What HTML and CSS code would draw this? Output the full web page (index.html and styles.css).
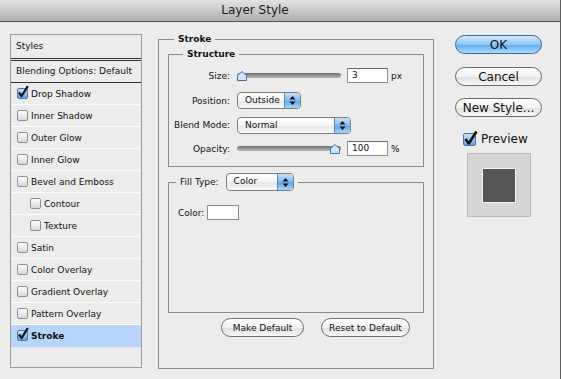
FILE: index.html
```html
<!DOCTYPE html>
<html lang="en">
<head>
    <meta charset="UTF-8">
    <title>Layer Style</title>
    <link rel="stylesheet" href="styles.css">
</head>
<body>
    <div class="window">
        <div class="titlebar">Layer Style</div>
        <div class="content">

            <!-- styles list on the left -->
            <div class="styles-list">
                <div class="list-head">Styles</div>
                <div class="list-blend">Blending Options: Default</div>
                <div class="item"><span class="cb on"><svg width="12" height="13" viewBox="0 0 12 13"><path d="M2 7.5 L4.6 11 L10.8 1.2" fill="none" stroke="#111" stroke-width="2.2" stroke-linejoin="round"/></svg></span>Drop Shadow</div>
                <div class="item"><span class="cb"></span>Inner Shadow</div>
                <div class="item"><span class="cb"></span>Outer Glow</div>
                <div class="item"><span class="cb"></span>Inner Glow</div>
                <div class="item"><span class="cb"></span>Bevel and Emboss</div>
                <div class="item sub"><span class="cb"></span>Contour</div>
                <div class="item sub"><span class="cb"></span>Texture</div>
                <div class="item"><span class="cb"></span>Satin</div>
                <div class="item"><span class="cb"></span>Color Overlay</div>
                <div class="item"><span class="cb"></span>Gradient Overlay</div>
                <div class="item"><span class="cb"></span>Pattern Overlay</div>
                <div class="item selected"><span class="cb on"><svg width="12" height="13" viewBox="0 0 12 13"><path d="M2 7.5 L4.6 11 L10.8 1.2" fill="none" stroke="#111" stroke-width="2.2" stroke-linejoin="round"/></svg></span>Stroke</div>
            </div>

            <!-- stroke settings -->
            <fieldset class="group outer">
                <legend>Stroke</legend>

                <fieldset class="group structure">
                    <legend>Structure</legend>
                    <div class="row">
                        <span class="label">Size:</span>
                        <div class="slider">
                            <div class="track"></div>
                            <svg class="thumb thumb-left" width="10" height="10" viewBox="0 0 10 10"><polygon points="5,0.5 9.5,4.5 9.5,9.5 0.5,9.5 0.5,4.5" fill="#cfe5fb" stroke="#3f72a8"/></svg>
                        </div>
                        <span class="field">3</span>
                        <span class="unit">px</span>
                    </div>
                    <div class="row">
                        <span class="label">Position:</span>
                        <div class="popup popup-position">
                            <span class="popup-text">Outside</span>
                            <span class="popup-arrows"><svg width="7" height="11" viewBox="0 0 7 11"><polygon points="3.5,1 6.5,4.5 0.5,4.5" fill="#111"/><polygon points="0.5,6.5 6.5,6.5 3.5,10" fill="#111"/></svg></span>
                        </div>
                    </div>
                    <div class="row">
                        <span class="label">Blend Mode:</span>
                        <div class="popup popup-blend">
                            <span class="popup-text">Normal</span>
                            <span class="popup-arrows"><svg width="7" height="11" viewBox="0 0 7 11"><polygon points="3.5,1 6.5,4.5 0.5,4.5" fill="#111"/><polygon points="0.5,6.5 6.5,6.5 3.5,10" fill="#111"/></svg></span>
                        </div>
                    </div>
                    <div class="row">
                        <span class="label">Opacity:</span>
                        <div class="slider">
                            <div class="track"></div>
                            <svg class="thumb thumb-right" width="10" height="10" viewBox="0 0 10 10"><polygon points="5,0.5 9.5,4.5 9.5,9.5 0.5,9.5 0.5,4.5" fill="#cfe5fb" stroke="#3f72a8"/></svg>
                        </div>
                        <span class="field">100</span>
                        <span class="unit">%</span>
                    </div>
                </fieldset>

                <fieldset class="group fill">
                    <legend class="fill-legend">
                        <span>Fill Type:</span>
                        <span class="popup popup-fill">
                            <span class="popup-text">Color</span>
                            <span class="popup-arrows"><svg width="7" height="11" viewBox="0 0 7 11"><polygon points="3.5,1 6.5,4.5 0.5,4.5" fill="#111"/><polygon points="0.5,6.5 6.5,6.5 3.5,10" fill="#111"/></svg></span>
                        </span>
                    </legend>
                    <div class="color-row">
                        <span>Color:</span>
                        <span class="swatch"></span>
                    </div>
                </fieldset>

                <div class="bottom-buttons">
                    <button class="small-btn make">Make Default</button>
                    <button class="small-btn reset">Reset to Default</button>
                </div>
            </fieldset>

            <!-- dialog buttons -->
            <div class="actions">
                <button class="btn btn-ok">OK</button>
                <button class="btn btn-cancel">Cancel</button>
                <button class="btn btn-new">New Style...</button>
                <div class="preview-check">
                    <span class="cb big on"><svg width="15" height="16" viewBox="0 0 15 16"><path d="M2.5 9 L5.8 13.5 L13.5 1.5" fill="none" stroke="#111" stroke-width="2.6" stroke-linejoin="round"/></svg></span>
                    Preview
                </div>
                <div class="preview-box">
                    <div class="preview-swatch"></div>
                </div>
            </div>
        </div>
    </div>
</body>
</html>
```

FILE: styles.css
```css
* {
    margin: 0;
    padding: 0;
    box-sizing: border-box;
}

body {
    font-family: "Lucida Grande", "DejaVu Sans", sans-serif;
    font-size: 9px;
    color: #111;
    background-color: #ececec;
}

.window {
    width: 561px;
    height: 379px;
    border-right: 1px solid #5e5e5e;
    display: flex;
    flex-direction: column;
}

.titlebar {
    height: 22px;
    border-bottom: 1px solid #555;
    background: linear-gradient(#e3e3e3, #b0b0b0);
    text-align: center;
    padding-right: 50px;
    font-size: 12px;
    line-height: 21px;
    color: #1c1c1c;
}

.content {
    display: flex;
    align-items: flex-start;
    padding: 12px 0 0 10px;
}

/* left list */
.styles-list {
    width: 132px;
    height: 334px;
    border: 1px solid #9b9b9b;
    flex-shrink: 0;
}

.list-head {
    height: 24px;
    line-height: 23px;
    padding-left: 5px;
    border-bottom: 1px solid #333;
}

.list-blend {
    height: 23px;
    margin-top: 1px;
    border-top: 1px solid #333;
    border-bottom: 1px solid #333;
    padding-left: 5px;
    line-height: 21px;
}

.item {
    height: 22px;
    border-bottom: 1px solid #fbfbfb;
    display: flex;
    align-items: center;
    padding-left: 6px;
    gap: 3px;
}

.item.sub {
    padding-left: 19px;
}

.item.selected {
    background-color: #b7d5fb;
    font-weight: bold;
    border-bottom-color: #b7d5fb;
}

.cb {
    width: 11px;
    height: 11px;
    border: 1px solid #8e8e8e;
    border-radius: 2px;
    background: linear-gradient(#fefefe, #d8d8d8);
    position: relative;
    flex-shrink: 0;
}

.cb.on {
    background: linear-gradient(#cbe3fb, #5fa6ec);
    border-color: #4c77a6;
}

.cb svg {
    position: absolute;
    left: -1px;
    top: -4px;
}

.cb.big {
    width: 13px;
    height: 13px;
}

/* fieldsets */
.group {
    border: 1px solid #8c8c8c;
    min-width: 0;
}

.group legend {
    font-weight: bold;
    line-height: 12px;
    padding: 0 4px;
}

.outer {
    width: 276px;
    height: 336px;
    margin: -1px 0 0 16px;
    padding: 3px 9px 0;
    flex-shrink: 0;
}

.outer > legend {
    margin-left: 6px;
}

.structure {
    padding: 3px 0 6px;
}

.structure > legend {
    margin-left: 14px;
}

.row {
    display: flex;
    align-items: center;
    height: 25px;
}

.row:nth-of-type(3) {
    height: 24px;
}

.row:nth-of-type(4) {
    height: 23px;
}

.label {
    width: 61px;
    text-align: right;
    margin-right: 7px;
}

.slider {
    width: 104px;
    height: 12px;
    position: relative;
    display: flex;
    align-items: center;
}

.track {
    width: 100%;
    height: 5px;
    border-radius: 3px;
    background: linear-gradient(#6f6f6f, #b8b8b8);
}

.thumb {
    position: absolute;
    top: 1px;
}

.thumb-left {
    left: 0;
}

.thumb-right {
    right: 1px;
}

.field {
    width: 41px;
    height: 15px;
    margin-left: 6px;
    background: #fff;
    border: 1px solid #8d8d8d;
    border-top-color: #6a6a6a;
    padding-left: 4px;
    line-height: 13px;
}

.unit {
    margin-left: 3px;
}

.popup {
    height: 17px;
    display: flex;
    border: 1px solid #7f7f7f;
    border-radius: 4px;
    overflow: hidden;
    background: linear-gradient(#ffffff, #f4f4f4 50%, #e6e6e6 51%, #f8f8f8);
    font-weight: normal;
}

.popup-text {
    flex: 1;
    padding-left: 7px;
    line-height: 15px;
}

.popup-arrows {
    width: 16px;
    display: flex;
    align-items: center;
    justify-content: center;
    background: linear-gradient(#c7e1fa, #7db9f1 50%, #5ea6ec 51%, #a4d3fb);
    border-left: 1px solid #5c87b5;
}

.popup-position {
    width: 64px;
}

.popup-blend {
    width: 114px;
}

.fill {
    height: 140px;
    margin-top: 6px;
    padding: 14px 0 0 9px;
}

.fill-legend {
    display: flex;
    align-items: center;
    gap: 7px;
    margin-left: -2px;
    line-height: 18px;
}

.fill-legend > span:first-child {
    font-weight: normal;
}

.popup-fill {
    width: 68px;
    height: 18px;
}

.color-row {
    display: flex;
    align-items: center;
    gap: 3px;
}

.swatch {
    width: 32px;
    height: 15px;
    background: #fff;
    border: 1px solid #8d8d8d;
}

.bottom-buttons {
    display: flex;
    justify-content: flex-end;
    gap: 17px;
    margin-top: 5px;
    padding-right: 14px;
}

.small-btn {
    height: 19px;
    border: 1px solid #6e6e6e;
    border-radius: 10px;
    background: linear-gradient(#ffffff, #f2f2f2 50%, #e0e0e0 51%, #f7f7f7);
    font-family: inherit;
    font-size: 9px;
    color: #111;
}

.make {
    width: 83px;
}

.reset {
    width: 89px;
}

/* right column */
.actions {
    width: 87px;
    margin-left: 21px;
    display: flex;
    flex-direction: column;
    flex-shrink: 0;
}

.btn {
    height: 19px;
    border: 1px solid #6b6b6b;
    border-radius: 10px;
    background: linear-gradient(#ffffff, #f2f2f2 50%, #e0e0e0 51%, #f7f7f7);
    font-family: inherit;
    font-size: 12px;
    color: #111;
}

.btn-ok {
    margin-top: 1px;
    border-color: #3d6a9c;
    background: linear-gradient(#d3e9fc, #8ec6f4 50%, #62abef 51%, #a9dcfd);
}

.btn-cancel {
    margin-top: 13px;
}

.btn-new {
    margin-top: 12px;
}

.preview-check {
    display: flex;
    align-items: center;
    gap: 5px;
    margin: 15px 0 0 8px;
    font-size: 12px;
    height: 14px;
}

.preview-box {
    width: 64px;
    height: 64px;
    margin: 7px 0 0 12px;
    background: #d6d6d6;
    border: 1px solid #bcbcbc;
    display: flex;
    align-items: center;
    justify-content: center;
}

.preview-swatch {
    width: 34px;
    height: 35px;
    background: #555;
    border: 1px solid #f2f2f2;
}
```
